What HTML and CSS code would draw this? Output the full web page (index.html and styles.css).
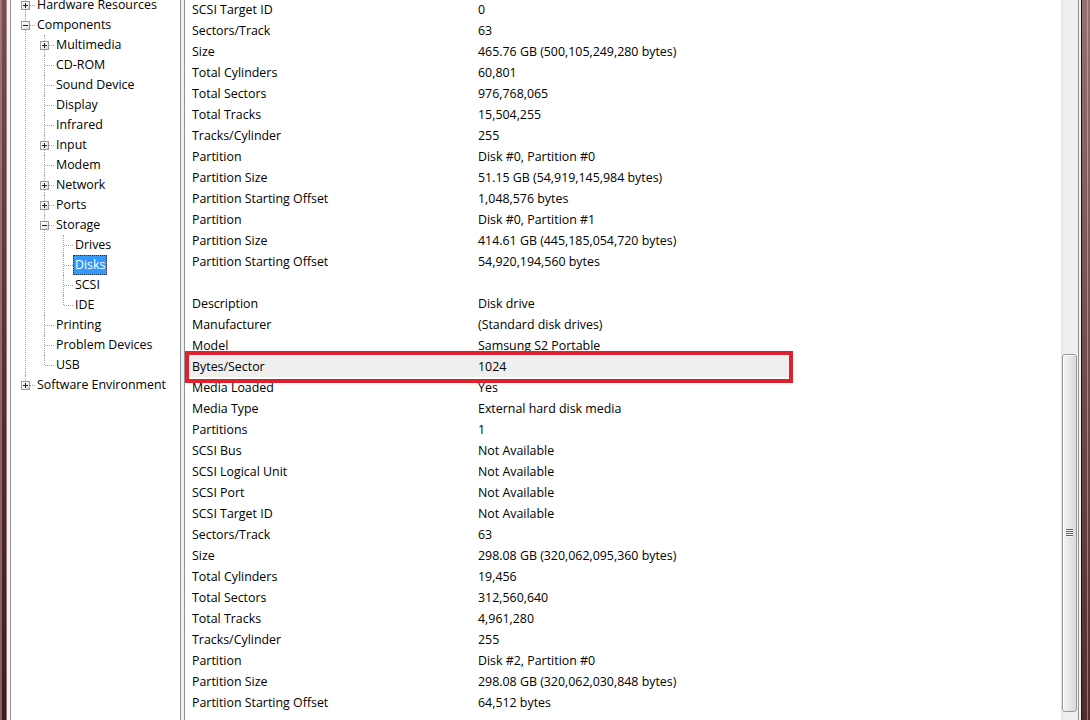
FILE: index.html
```html
<!DOCTYPE html>
<html lang="en">
<head>
<meta charset="utf-8">
<title>System Information</title>
<link rel="stylesheet" href="styles.css">
</head>
<body>
<div class="window">
  <div class="frame frame-left"></div>
  <div class="gap gap-left"></div>

  <nav class="tree-pane">
    <ul class="tree root">
      <li><div class="node"><span class="exp plus"></span><span class="label">Hardware Resources</span></div></li>
      <li><div class="node"><span class="exp"></span><span class="label">Components</span></div>
        <ul class="tree">
          <li><div class="node"><span class="exp plus"></span><span class="label">Multimedia</span></div></li>
          <li><div class="node"><span class="label">CD-ROM</span></div></li>
          <li><div class="node"><span class="label">Sound Device</span></div></li>
          <li><div class="node"><span class="label">Display</span></div></li>
          <li><div class="node"><span class="label">Infrared</span></div></li>
          <li><div class="node"><span class="exp plus"></span><span class="label">Input</span></div></li>
          <li><div class="node"><span class="label">Modem</span></div></li>
          <li><div class="node"><span class="exp plus"></span><span class="label">Network</span></div></li>
          <li><div class="node"><span class="exp plus"></span><span class="label">Ports</span></div></li>
          <li><div class="node"><span class="exp"></span><span class="label">Storage</span></div>
            <ul class="tree">
              <li><div class="node"><span class="label">Drives</span></div></li>
              <li><div class="node"><span class="label selected">Disks</span></div></li>
              <li><div class="node"><span class="label">SCSI</span></div></li>
              <li><div class="node"><span class="label">IDE</span></div></li>
            </ul>
          </li>
          <li><div class="node"><span class="label">Printing</span></div></li>
          <li><div class="node"><span class="label">Problem Devices</span></div></li>
          <li><div class="node"><span class="label">USB</span></div></li>
        </ul>
      </li>
      <li><div class="node"><span class="exp plus"></span><span class="label">Software Environment</span></div></li>
    </ul>
  </nav>

  <div class="splitter"></div>

  <section class="list-pane">
    <div class="list">
      <div class="rows">
        <div class="row"><span class="k">SCSI Target ID</span><span class="v">0</span></div>
        <div class="row"><span class="k">Sectors/Track</span><span class="v">63</span></div>
        <div class="row"><span class="k">Size</span><span class="v">465.76 GB (500,105,249,280 bytes)</span></div>
        <div class="row"><span class="k">Total Cylinders</span><span class="v">60,801</span></div>
        <div class="row"><span class="k">Total Sectors</span><span class="v">976,768,065</span></div>
        <div class="row"><span class="k">Total Tracks</span><span class="v">15,504,255</span></div>
        <div class="row"><span class="k">Tracks/Cylinder</span><span class="v">255</span></div>
        <div class="row"><span class="k">Partition</span><span class="v">Disk #0, Partition #0</span></div>
        <div class="row"><span class="k">Partition Size</span><span class="v">51.15 GB (54,919,145,984 bytes)</span></div>
        <div class="row"><span class="k">Partition Starting Offset</span><span class="v">1,048,576 bytes</span></div>
        <div class="row"><span class="k">Partition</span><span class="v">Disk #0, Partition #1</span></div>
        <div class="row"><span class="k">Partition Size</span><span class="v">414.61 GB (445,185,054,720 bytes)</span></div>
        <div class="row"><span class="k">Partition Starting Offset</span><span class="v">54,920,194,560 bytes</span></div>
        <div class="row"></div>
        <div class="row"><span class="k">Description</span><span class="v">Disk drive</span></div>
        <div class="row"><span class="k">Manufacturer</span><span class="v">(Standard disk drives)</span></div>
        <div class="row"><span class="k">Model</span><span class="v">Samsung S2 Portable</span></div>
        <div class="row marked"><span class="k">Bytes/Sector</span><span class="v">1024</span></div>
        <div class="row"><span class="k">Media Loaded</span><span class="v">Yes</span></div>
        <div class="row"><span class="k">Media Type</span><span class="v">External hard disk media</span></div>
        <div class="row"><span class="k">Partitions</span><span class="v">1</span></div>
        <div class="row"><span class="k">SCSI Bus</span><span class="v">Not Available</span></div>
        <div class="row"><span class="k">SCSI Logical Unit</span><span class="v">Not Available</span></div>
        <div class="row"><span class="k">SCSI Port</span><span class="v">Not Available</span></div>
        <div class="row"><span class="k">SCSI Target ID</span><span class="v">Not Available</span></div>
        <div class="row"><span class="k">Sectors/Track</span><span class="v">63</span></div>
        <div class="row"><span class="k">Size</span><span class="v">298.08 GB (320,062,095,360 bytes)</span></div>
        <div class="row"><span class="k">Total Cylinders</span><span class="v">19,456</span></div>
        <div class="row"><span class="k">Total Sectors</span><span class="v">312,560,640</span></div>
        <div class="row"><span class="k">Total Tracks</span><span class="v">4,961,280</span></div>
        <div class="row"><span class="k">Tracks/Cylinder</span><span class="v">255</span></div>
        <div class="row"><span class="k">Partition</span><span class="v">Disk #2, Partition #0</span></div>
        <div class="row"><span class="k">Partition Size</span><span class="v">298.08 GB (320,062,030,848 bytes)</span></div>
        <div class="row"><span class="k">Partition Starting Offset</span><span class="v">64,512 bytes</span></div>
      </div>
    </div>
    <div class="vscroll">
      <div class="thumb"><span class="grip"></span></div>
    </div>
  </section>

  <div class="gap gap-right"></div>
  <div class="frame frame-right"></div>
</div>
</body>
</html>
```

FILE: styles.css
```css
html, body {
  margin: 0;
  padding: 0;
  overflow: hidden;
}

body {
  font-family: "Open Sans", "Segoe UI", "Noto Sans", sans-serif;
  font-size: 12.4px;
  color: #000;
}

.window {
  display: flex;
  width: 1090px;
  height: 720px;
  overflow: hidden;
  background: #f0f0f0;
}

/* glass window border */
.frame-left {
  width: 7px;
  flex: none;
  background:
    linear-gradient(to right, rgba(190, 150, 150, 0.55) 0, rgba(190, 150, 150, 0.55) 2px, transparent 2px, transparent 6px, rgba(220, 200, 200, 0.5) 6px),
    linear-gradient(to bottom, #7a4c4c 0%, #5c3232 45%, #3e1c1c 100%);
}

.frame-right {
  width: 9px;
  flex: none;
  background:
    linear-gradient(to right, #1e0e0e 0, #1e0e0e 1px, transparent 1px, transparent 6px, rgba(230, 210, 210, 0.45) 6px, rgba(230, 210, 210, 0.45) 7px, transparent 7px),
    linear-gradient(to bottom, #947272 0%, #7a5454 40%, #542c2c 100%);
}

.gap {
  flex: none;
  background: #f4f4f4;
}
.gap-left { width: 3px; }
.gap-right { width: 2px; }

/* navigation tree */
.tree-pane {
  width: 169px;
  flex: none;
  background: #fff;
  border-left: 1px solid #8e9196;
  border-right: 1px solid #8e9196;
  overflow: hidden;
}

.tree {
  list-style: none;
  margin: 0;
  padding: 0 0 0 19px;
}

.tree.root {
  padding-left: 10px;
  margin-top: -5px;
}

.tree li {
  position: relative;
}

.tree li::before {
  content: "";
  position: absolute;
  left: 4px;
  top: 0;
  bottom: 0;
  border-left: 1px dotted #a3a3a3;
}

.tree li:last-child::before {
  bottom: auto;
  height: 10px;
}

.node {
  position: relative;
  height: 20px;
  display: flex;
  align-items: center;
  padding-left: 16px;
  white-space: nowrap;
}

.node::before {
  content: "";
  position: absolute;
  left: 5px;
  top: 10px;
  width: 9px;
  border-top: 1px dotted #a3a3a3;
}

.exp {
  position: absolute;
  left: 0;
  top: 6px;
  width: 9px;
  height: 9px;
  box-sizing: border-box;
  border: 1px solid #9a9a9a;
  background: linear-gradient(135deg, #ffffff 0%, #f2f2f2 50%, #d9d9d9 100%);
  z-index: 1;
}

.exp::before {
  content: "";
  position: absolute;
  left: 1px;
  top: 3px;
  width: 5px;
  height: 1px;
  background: #222;
}

.exp.plus::after {
  content: "";
  position: absolute;
  left: 3px;
  top: 1px;
  width: 1px;
  height: 5px;
  background: #222;
}

.label {
  margin-left: -2px;
  padding: 0 1px;
  border: 1px solid transparent;
  line-height: 18px;
}

.label.selected {
  background: #3399ff;
  color: #fff;
  border: 1px dotted #20324a;
}

.splitter {
  width: 3px;
  flex: none;
  background: #f0f0f0;
}

/* details list */
.list-pane {
  flex: 1;
  display: flex;
  background: #fff;
  border-left: 1px solid #8e9196;
  border-right: 1px solid #8e9196;
  overflow: hidden;
}

.list {
  flex: 1;
  overflow: hidden;
}

.rows {
  margin-top: -1px;
  width: 608px;
}

.row {
  display: flex;
  height: 21px;
  line-height: 21px;
  padding-left: 7px;
  white-space: nowrap;
}

.row .k {
  width: 286px;
  flex: none;
}

.row.marked {
  position: relative;
  background: #efefef;
}

.row.marked::after {
  content: "";
  position: absolute;
  left: 0;
  right: 0;
  top: -5px;
  bottom: -6px;
  border: 4px solid #e0202c;
}

/* vertical scrollbar */
.vscroll {
  width: 17px;
  flex: none;
  display: flex;
  flex-direction: column;
  background: linear-gradient(to right, #e2e2e2 0, #e2e2e2 1px, #ededed 1px, #f0f0f0 100%);
}

.thumb {
  margin: 354px 1px 0 1px;
  height: 358px;
  box-sizing: border-box;
  border: 1px solid #989898;
  border-radius: 3px;
  background: linear-gradient(to right, #f4f4f4 0%, #e8e8e8 45%, #d8d8d8 100%);
  box-shadow: inset 1px 1px 0 #fdfdfd;
  display: flex;
  align-items: center;
  justify-content: center;
}

.grip {
  width: 7px;
  height: 8px;
  background: repeating-linear-gradient(to bottom, #5e5e5e 0, #5e5e5e 1px, #f8f8f8 1px, #f8f8f8 2px);
}
```
